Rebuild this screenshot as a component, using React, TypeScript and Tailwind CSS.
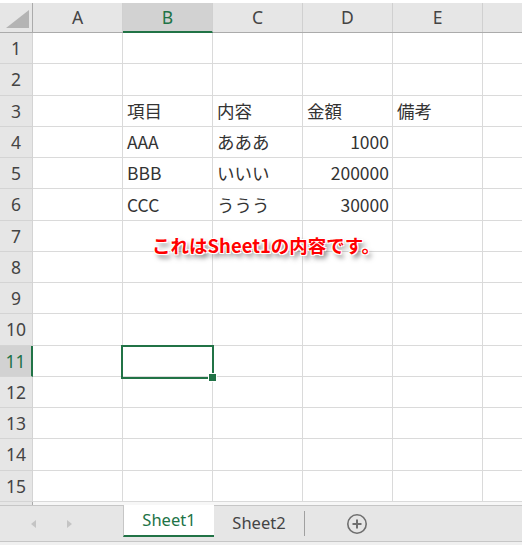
import { Fragment } from 'react';

const cols = ['A', 'B', 'C', 'D', 'E'];

type Cell = { text: string; right?: boolean };
const data: Record<number, Record<string, Cell>> = {
  3: { B: { text: '項目' }, C: { text: '内容' }, D: { text: '金額' }, E: { text: '備考' } },
  4: { B: { text: 'AAA' }, C: { text: 'あああ' }, D: { text: '1000', right: true } },
  5: { B: { text: 'BBB' }, C: { text: 'いいい' }, D: { text: '200000', right: true } },
  6: { B: { text: 'CCC' }, C: { text: 'ううう' }, D: { text: '30000', right: true } },
};

const rows = Array.from({ length: 15 }, (_, i) => i + 1);

function PlusCircle() {
  return (
    <svg width="22" height="22" viewBox="0 0 22 22" fill="none" stroke="#6f6f6f" strokeWidth="1.6">
      <circle cx="11" cy="11" r="9.2" />
      <path d="M11 6.5v9M6.5 11h9" strokeWidth="2" />
    </svg>
  );
}

export default function App() {
  return (
    <div
      className="relative w-[522px] h-[545px] overflow-hidden bg-white pt-[3px] text-[#333]"
      style={{ fontFamily: '"Noto Sans", "Noto Sans CJK JP", sans-serif' }}
    >
      {/* Column headers */}
      <div className="flex h-[30px] bg-[#e6e6e6] border-b border-[#ababab] text-[17.5px] text-[#444]">
        <div className="w-[33px] shrink-0 border-r border-[#ababab] flex items-end justify-end pr-[3px] pb-[4px]">
          <svg width="23" height="18" viewBox="0 0 23 18">
            <polygon points="23,0 23,18 0,18" fill="#b4b4b4" />
          </svg>
        </div>
        {cols.map((c) => (
          <div
            key={c}
            className={`w-[90px] shrink-0 flex items-center justify-center border-r border-[#d0d0d0] ${
              c === 'B' ? 'bg-[#d2d2d2] text-[#217346] border-b-2 border-b-[#217346] -mb-px' : ''
            }`}
          >
            {c}
          </div>
        ))}
        <div className="flex-1" />
      </div>

      {/* Grid */}
      <div style={{ fontFamily: '"Noto Sans CJK JP", sans-serif' }}>
        {rows.map((r) => (
          <div key={r} className="flex h-[31.25px]">
            <div
              className={`w-[33px] shrink-0 flex items-center justify-center border-b border-[#d4d4d4] text-[17.5px] ${
                r === 11
                  ? 'bg-[#d2d2d2] text-[#217346] border-r-2 border-r-[#217346]'
                  : 'bg-[#e6e6e6] text-[#444] border-r border-[#ababab]'
              }`}
              style={{ fontFamily: '"Noto Sans", sans-serif' }}
            >
              {r}
            </div>
            {cols.map((c) => {
              const cell = data[r]?.[c];
              return (
                <div
                  key={c}
                  className={`relative w-[90px] shrink-0 flex items-center border-r border-b border-[#dadada] text-[17.5px] leading-none ${
                    cell?.right ? 'justify-end pr-[3px]' : 'pl-[4px]'
                  }`}
                >
                  {cell?.text}
                  {r === 11 && c === 'B' && (
                    <Fragment>
                      <div className="absolute z-10 -left-[2px] -top-[1px] w-[93px] h-[34px] border-2 border-[#217346]" />
                      <div className="absolute z-10 left-[85px] top-[27px] w-[9px] h-[9px] bg-[#217346] border border-white" />
                    </Fragment>
                  )}
                </div>
              );
            })}
            <div className="flex-1 border-b border-[#dadada]" />
          </div>
        ))}
        <div className="flex h-[3.25px]">
          <div className="w-[33px] shrink-0 bg-[#e6e6e6] border-r border-[#ababab]" />
          <div className="flex-1 bg-[#f7f7f7]" />
        </div>
      </div>

      {/* Sheet tabs */}
      <div className="flex h-[36px] bg-[#e6e6e6] border-t border-[#c6c6c6] text-[16.5px]">
        <div className="w-[123px] shrink-0 flex items-center">
          <svg className="ml-[31px]" width="5" height="8" viewBox="0 0 5 8">
            <polygon points="5,0 5,8 0,4" fill="#c4c4c4" />
          </svg>
          <svg className="ml-[31px]" width="5" height="8" viewBox="0 0 5 8">
            <polygon points="0,0 0,8 5,4" fill="#c4c4c4" />
          </svg>
        </div>
        <div className="w-[91px] h-[32px] -mt-px shrink-0 bg-white border-l border-[#c6c6c6] border-b-2 border-b-[#217346] flex items-center justify-center text-[#217346]">
          Sheet1
        </div>
        <div className="w-[90px] shrink-0 flex items-center justify-center text-[#444]">Sheet2</div>
        <div className="w-px h-[25px] mt-[5px] bg-[#a0a0a0]" />
        <div className="w-[104px] flex items-center justify-center">
          <PlusCircle />
        </div>
      </div>
      <div className="h-[4px] bg-[#f0f0f0] border-t border-[#c6c6c6]" />

      {/* Text box overlay */}
      <div
        className="absolute left-[152px] top-[236px] text-[18.5px] leading-none font-bold text-[#ff0000] whitespace-nowrap [text-shadow:1px_1px_0_#fff,-1px_-1px_0_#fff,1px_-1px_0_#fff,-1px_1px_0_#fff,0_0_2px_#fff,3px_4px_5px_rgba(0,0,0,0.55)]"
        style={{ fontFamily: '"Noto Sans CJK JP", sans-serif' }}
      >
        これはSheet1の内容です。
      </div>
    </div>
  );
}
